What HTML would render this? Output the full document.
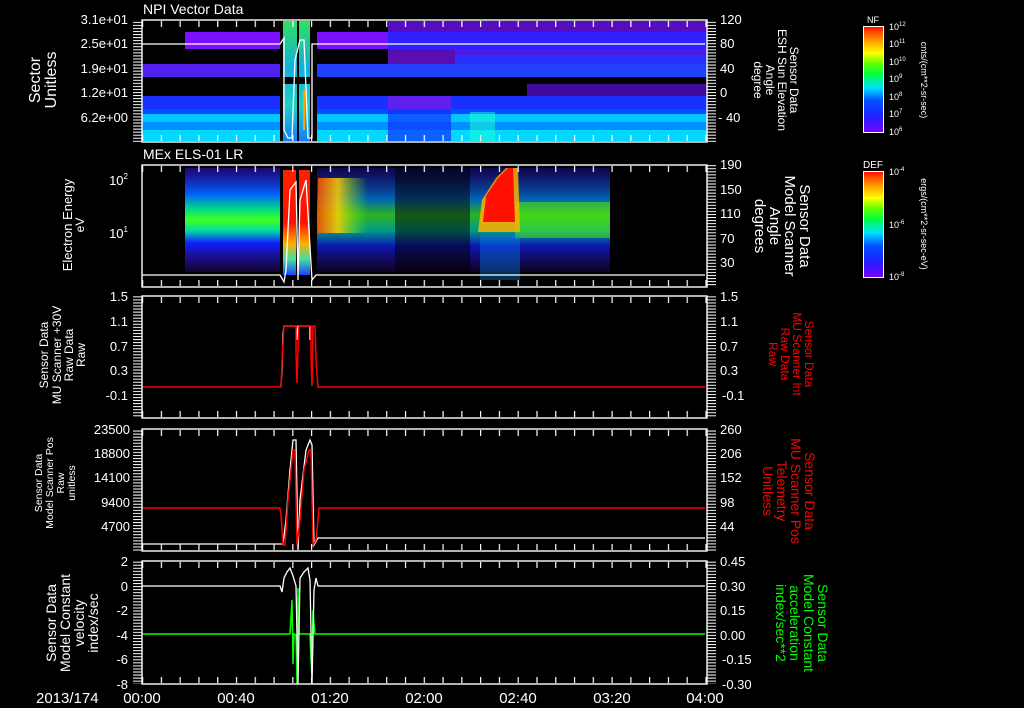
<!DOCTYPE html>
<html><head><meta charset="utf-8"><style>
html,body{margin:0;padding:0;background:#000;width:1024px;height:708px;overflow:hidden}
svg{display:block}
text{font-family:"Liberation Sans",sans-serif;fill:#fff}
</style></head><body>
<svg width="1024" height="708" viewBox="0 0 1024 708" xmlns="http://www.w3.org/2000/svg">
<defs>
<linearGradient id="rb" x1="0" y1="1" x2="0" y2="0">
<stop offset="0" stop-color="#7a00ff"/><stop offset="0.15" stop-color="#2020ff"/><stop offset="0.3" stop-color="#0050ff"/><stop offset="0.42" stop-color="#00e0ff"/><stop offset="0.55" stop-color="#00ff40"/><stop offset="0.65" stop-color="#60ff00"/><stop offset="0.75" stop-color="#ffff00"/><stop offset="0.88" stop-color="#ff9000"/><stop offset="1" stop-color="#ff1000"/>
</linearGradient>
<linearGradient id="ls" x1="0" y1="0" x2="0" y2="1">
<stop offset="0" stop-color="#3010e0" stop-opacity=".5"/><stop offset="0.25" stop-color="#0060ff"/><stop offset="0.4" stop-color="#00e080"/><stop offset="0.5" stop-color="#40ff20"/><stop offset="0.6" stop-color="#00e0a0"/><stop offset="0.72" stop-color="#1020ff"/><stop offset="1" stop-color="#4010c0" stop-opacity=".25"/>
</linearGradient>
<linearGradient id="rs" x1="0" y1="0" x2="0" y2="1">
<stop offset="0" stop-color="#3010e0" stop-opacity=".5"/><stop offset="0.3" stop-color="#0090ff"/><stop offset="0.45" stop-color="#40ff30"/><stop offset="0.6" stop-color="#00e0c0"/><stop offset="0.75" stop-color="#1020ff"/><stop offset="1" stop-color="#4010c0" stop-opacity=".25"/>
</linearGradient>
<linearGradient id="yb" x1="0" y1="0" x2="1" y2="0">
<stop offset="0" stop-color="#ff5000"/><stop offset="0.4" stop-color="#ffd000"/><stop offset="1" stop-color="#60ff00" stop-opacity="0"/>
</linearGradient>
<linearGradient id="red" x1="0" y1="0" x2="0" y2="1">
<stop offset="0" stop-color="#ff2000"/><stop offset="0.5" stop-color="#ff1000"/><stop offset="0.7" stop-color="#ffb000"/><stop offset="0.85" stop-color="#40e0a0"/><stop offset="1" stop-color="#2040ff"/>
</linearGradient>
<linearGradient id="strip" x1="0" y1="0" x2="0" y2="1">
<stop offset="0" stop-color="#30e060"/><stop offset="0.4" stop-color="#10b0e0"/><stop offset="0.7" stop-color="#20d0c0"/><stop offset="1" stop-color="#1080ff"/>
</linearGradient>
<pattern id="tx" x="142" y="0" width="18.78" height="10" patternUnits="userSpaceOnUse"><rect x="0" y="0" width="1.2" height="10" fill="#fff"/></pattern>
<pattern id="ty" x="0" y="0.5" width="10" height="3.05" patternUnits="userSpaceOnUse"><rect x="0" y="0" width="10" height="1" fill="#fff"/></pattern>
</defs>

<!-- Panel 1 spectrogram -->
<g>
<rect x="185" y="32" width="95" height="17" fill="#7a10ff"/>
<rect x="317" y="32" width="71" height="17" fill="#7a10ff"/>
<rect x="388" y="21" width="319" height="11" fill="#6a10f0" opacity=".8"/>
<rect x="388" y="32" width="319" height="17" fill="#3020ff"/>
<rect x="388" y="49" width="67" height="15" fill="#7010e0" opacity=".8"/>
<rect x="455" y="49" width="252" height="15" fill="#2830ff"/>
<rect x="455" y="49" width="252" height="6" fill="#6010e0" opacity=".7"/>
<rect x="142" y="64" width="138" height="13" fill="#5020f0"/>
<rect x="317" y="64" width="390" height="13" fill="#2040ff"/>
<rect x="527" y="84" width="180" height="12" fill="#6010e0" opacity=".7"/>
<rect x="142" y="96" width="138" height="13" fill="#1a30ff"/>
<rect x="317" y="96" width="390" height="13" fill="#1a30ff"/>
<rect x="388" y="96" width="63" height="13" fill="#6020f0"/>
<rect x="142" y="109" width="138" height="5" fill="#0050ff"/>
<rect x="317" y="109" width="390" height="5" fill="#0050ff"/>
<rect x="142" y="114" width="138" height="8" fill="#00c8ff"/>
<rect x="317" y="114" width="390" height="8" fill="#00c8ff"/>
<rect x="142" y="122" width="138" height="8" fill="#0090ff"/>
<rect x="317" y="122" width="390" height="8" fill="#0090ff"/>
<rect x="142" y="130" width="138" height="11" fill="#00d8ff"/>
<rect x="317" y="130" width="390" height="11" fill="#00d8ff"/>
<rect x="388" y="109" width="63" height="32" fill="#1030ff" opacity=".7"/>
<rect x="470" y="112" width="25" height="29" fill="#20ffd0" opacity=".5"/>
<rect x="283" y="21" width="14" height="120" fill="url(#strip)"/>
<rect x="299" y="21" width="11" height="120" fill="url(#strip)"/>
<rect x="283" y="77" width="14" height="7" fill="#000"/>
<rect x="299" y="77" width="11" height="7" fill="#000"/>
<rect x="303" y="90" width="2" height="40" fill="#ffa000"/>
</g>
<!-- Panel 2 spectrogram -->
<g>
<rect x="185" y="168" width="95" height="104" fill="url(#ls)"/>
<rect x="317" y="168" width="293" height="104" fill="url(#rs)" opacity=".7"/>
<rect x="318" y="178" width="50" height="55" fill="url(#yb)" opacity=".85"/>
<rect x="395" y="168" width="75" height="104" fill="#000" opacity=".5"/>
<rect x="515" y="202" width="95" height="36" fill="#60ff00" opacity=".45"/>
<polygon points="478,232 482,200 496,178 506,168 518,168 520,232" fill="#ffb000" opacity=".85"/>
<polygon points="483,222 486,196 498,178 508,168 513,168 515,222" fill="#ff1000"/>
<rect x="283" y="170" width="13" height="105" fill="url(#red)"/>
<rect x="299" y="170" width="11" height="105" fill="url(#red)"/>
<rect x="480" y="235" width="40" height="45" fill="#0090ff" opacity=".35"/>
</g>

<!-- white overlay lines panel1/2 -->
<g stroke="#fff" stroke-width="1.3" fill="none">
<polyline points="142,44 280,44 284,38 284,130 288,138 292,138 295,60 300,40 304,40 308,138 312,138 312,44 316,44 705,44"/>
<polyline points="142,275 280,275 284,282 286,270 290,190 296,182 298,280 300,200 306,180 312,280 316,275 705,275"/>
</g>

<!-- Panel 3 -->
<polyline fill="none" stroke="#fff" stroke-width="1.3" points="281,386 282,370 283,334 284,326 296,326 297,340 298,326 308,326 310,326 310,340"/>
<polyline fill="none" stroke="#f00" stroke-width="1.5" points="142,387 281,387 282,362 284,326 296,326 296,352 297,383 298,350 299,326 311,326 311,354 312,386 313,326 315,326 316,360 318,387 705,387"/>
<!-- Panel 4 -->
<polyline fill="none" stroke="#fff" stroke-width="1.3" points="142,544 283,544 286,520 290,470 293,440 296,440 298,550 300,500 306,450 310,440 312,445 314,545 318,538 705,538"/>
<polyline fill="none" stroke="#f00" stroke-width="1.5" points="142,508 280,508 281,515 283,545 285,545 288,500 293,450 295,450 297,545 300,520 304,470 309,450 311,450 313,545 316,540 318,520 319,508 705,508"/>
<!-- Panel 5 -->
<polyline fill="none" stroke="#0f0" stroke-width="1.5" points="142,634 290,634 292,600 293,664 294,634 296,635 297,684 298,588 299,634 310,634 311,660 312,675 313,610 314,624 315,634 705,634"/>
<polyline fill="none" stroke="#fff" stroke-width="1.3" points="142,586 280,586 282,592 284,578 287,572 290,568 293,576 296,586 298,684 300,578 304,572 308,568 310,580 312,684 314,590 316,578 318,586 705,586"/>

<!-- frames -->
<g stroke="#fff" stroke-width="1.4" fill="none">
<rect x="142" y="20" width="565" height="122"/>
<rect x="142" y="165" width="565" height="122"/>
<rect x="142" y="296" width="565" height="122"/>
<rect x="142" y="429" width="565" height="122"/>
<rect x="142" y="561" width="565" height="123"/>
</g>
<!-- x ticks -->
<g>
<rect x="142" y="21" width="565" height="6" fill="url(#tx)"/><rect x="142" y="135" width="565" height="6" fill="url(#tx)"/>
<rect x="142" y="166" width="565" height="6" fill="url(#tx)"/><rect x="142" y="280" width="565" height="6" fill="url(#tx)"/>
<rect x="142" y="297" width="565" height="6" fill="url(#tx)"/><rect x="142" y="411" width="565" height="6" fill="url(#tx)"/>
<rect x="142" y="430" width="565" height="6" fill="url(#tx)"/><rect x="142" y="544" width="565" height="6" fill="url(#tx)"/>
<rect x="142" y="562" width="565" height="6" fill="url(#tx)"/><rect x="142" y="677" width="565" height="6" fill="url(#tx)"/>
</g>
<!-- y minor ticks -->
<g fill="url(#ty)">
<rect x="133" y="20" width="9" height="122"/><rect x="707" y="20" width="9" height="122"/>
<rect x="707" y="165" width="9" height="122"/>
<rect x="133" y="296" width="9" height="122"/><rect x="707" y="296" width="9" height="122"/>
<rect x="133" y="429" width="9" height="122"/><rect x="707" y="429" width="9" height="122"/>
<rect x="133" y="561" width="9" height="123"/><rect x="707" y="561" width="9" height="123"/>
</g>

<!-- tick labels -->
<g font-size="13" text-anchor="end">
<text x="128" y="24">3.1e+01</text><text x="128" y="48">2.5e+01</text><text x="128" y="73">1.9e+01</text><text x="128" y="97">1.2e+01</text><text x="128" y="122">6.2e+00</text>
<text x="128" y="185">10<tspan font-size="8" dy="-6">2</tspan></text><text x="128" y="238">10<tspan font-size="8" dy="-6">1</tspan></text>
<text x="128" y="301">1.5</text><text x="128" y="326">1.1</text><text x="128" y="351">0.7</text><text x="128" y="375">0.3</text><text x="128" y="400">-0.1</text>
<text x="130" y="434">23500</text><text x="130" y="458">18800</text><text x="130" y="482">14100</text><text x="130" y="507">9400</text><text x="130" y="531">4700</text>
<text x="128" y="566">2</text><text x="128" y="591">0</text><text x="128" y="615">-2</text><text x="128" y="640">-4</text><text x="128" y="664">-6</text><text x="128" y="689">-8</text>
</g>
<g font-size="13">
<text x="720" y="24">120</text><text x="720" y="48">80</text><text x="720" y="73">40</text><text x="720" y="97">0</text><text x="718" y="122">- 40</text>
<text x="720" y="169">190</text><text x="720" y="194">150</text><text x="720" y="218">110</text><text x="720" y="243">70</text><text x="720" y="267">30</text>
<text x="720" y="301">1.5</text><text x="720" y="326">1.1</text><text x="720" y="351">0.7</text><text x="720" y="375">0.3</text><text x="722" y="400">-0.1</text>
<text x="720" y="434">260</text><text x="720" y="458">206</text><text x="720" y="482">152</text><text x="720" y="507">98</text><text x="720" y="531">44</text>
<text x="720" y="566">0.45</text><text x="720" y="591">0.30</text><text x="720" y="615">0.15</text><text x="720" y="640">0.00</text><text x="722" y="664">-0.15</text><text x="722" y="689">-0.30</text>
</g>
<g font-size="15" text-anchor="middle">
<text x="142" y="703">00:00</text><text x="236" y="703">00:40</text><text x="330" y="703">01:20</text><text x="424" y="703">02:00</text><text x="518" y="703">02:40</text><text x="612" y="703">03:20</text><text x="705" y="703">04:00</text>
</g>
<text x="36" y="703" font-size="15">2013/174</text>
<text x="143" y="14" font-size="14">NPI Vector Data</text>
<text x="143" y="159" font-size="14">MEx ELS-01 LR</text>

<!-- left titles -->
<g text-anchor="middle">
<text transform="translate(40,80) rotate(-90)" font-size="16">Sector</text>
<text transform="translate(56,80) rotate(-90)" font-size="16">Unitless</text>
<text transform="translate(72,225) rotate(-90)" font-size="13">Electron Energy</text>
<text transform="translate(84,225) rotate(-90)" font-size="12">eV</text>
<text transform="translate(48,355) rotate(-90)" font-size="12">Sensor Data</text>
<text transform="translate(61,355) rotate(-90)" font-size="12">MU Scanner +30V</text>
<text transform="translate(73,355) rotate(-90)" font-size="12">Raw Data</text>
<text transform="translate(85,355) rotate(-90)" font-size="12">Raw</text>
<text transform="translate(42,483) rotate(-90)" font-size="10.5">Sensor Data</text>
<text transform="translate(53,483) rotate(-90)" font-size="10.5">Model Scanner Pos</text>
<text transform="translate(64,483) rotate(-90)" font-size="10.5">Raw</text>
<text transform="translate(75,483) rotate(-90)" font-size="10.5">unitless</text>
<text transform="translate(56,623) rotate(-90)" font-size="14">Sensor Data</text>
<text transform="translate(70,623) rotate(-90)" font-size="14">Model Constant</text>
<text transform="translate(84,623) rotate(-90)" font-size="14">velocity</text>
<text transform="translate(98,623) rotate(-90)" font-size="14">index/sec</text>
</g>
<!-- right titles -->
<g text-anchor="middle">
<text transform="translate(790,80) rotate(90)" font-size="12">Sensor Data</text>
<text transform="translate(778,80) rotate(90)" font-size="12">ESH Sun Elevation</text>
<text transform="translate(766,80) rotate(90)" font-size="12">Angle</text>
<text transform="translate(754,80) rotate(90)" font-size="12">degree</text>
<text transform="translate(800,226) rotate(90)" font-size="15">Sensor Data</text>
<text transform="translate(785,226) rotate(90)" font-size="15">Model Scanner</text>
<text transform="translate(770,226) rotate(90)" font-size="15">Angle</text>
<text transform="translate(755,226) rotate(90)" font-size="15">degrees</text>
</g>
<g text-anchor="middle">
<text transform="translate(805,354) rotate(90)" font-size="12" style="fill:#f00">Sensor Data</text>
<text transform="translate(793,354) rotate(90)" font-size="12" style="fill:#f00">MU Scanner Int</text>
<text transform="translate(781,354) rotate(90)" font-size="12" style="fill:#f00">Raw Data</text>
<text transform="translate(769,354) rotate(90)" font-size="12" style="fill:#f00">Raw</text>
<text transform="translate(805,491) rotate(90)" font-size="14" style="fill:#f00">Sensor Data</text>
<text transform="translate(791,491) rotate(90)" font-size="14" style="fill:#f00">MU Scanner Pos</text>
<text transform="translate(777,491) rotate(90)" font-size="14" style="fill:#f00">Telemetry</text>
<text transform="translate(763,491) rotate(90)" font-size="14" style="fill:#f00">Unitless</text>
<text transform="translate(818,623) rotate(90)" font-size="14" style="fill:#0f0">Sensor Data</text>
<text transform="translate(804,623) rotate(90)" font-size="14" style="fill:#0f0">Model Constant</text>
<text transform="translate(790,623) rotate(90)" font-size="14" style="fill:#0f0">acceleration</text>
<text transform="translate(776,623) rotate(90)" font-size="14" style="fill:#0f0">index/sec**2</text>
</g>

<!-- colorbars -->
<rect x="863.5" y="26.5" width="20" height="106" fill="url(#rb)" stroke="#fff"/>
<rect x="863.5" y="171.5" width="20" height="106" fill="url(#rb)" stroke="#fff"/>
<text x="873" y="23" font-size="9" text-anchor="middle">NF</text>
<text x="873" y="168" font-size="10" text-anchor="middle">DEF</text>
<g font-size="9">
<text x="889" y="30">10<tspan font-size="6" dy="-4">12</tspan></text>
<text x="889" y="47">10<tspan font-size="6" dy="-4">11</tspan></text>
<text x="889" y="65">10<tspan font-size="6" dy="-4">10</tspan></text>
<text x="889" y="82">10<tspan font-size="6" dy="-4">9</tspan></text>
<text x="889" y="100">10<tspan font-size="6" dy="-4">8</tspan></text>
<text x="889" y="117">10<tspan font-size="6" dy="-4">7</tspan></text>
<text x="889" y="135">10<tspan font-size="6" dy="-4">6</tspan></text>
<text x="889" y="175">10<tspan font-size="6" dy="-4">-4</tspan></text>
<text x="889" y="228">10<tspan font-size="6" dy="-4">-6</tspan></text>
<text x="889" y="280">10<tspan font-size="6" dy="-4">-8</tspan></text>
</g>
<text transform="translate(921,80) rotate(90)" font-size="9" text-anchor="middle">cnts/(cm**2-sr-sec)</text>
<text transform="translate(921,224) rotate(90)" font-size="9" text-anchor="middle">ergs/(cm**2-sr-sec-eV)</text>
</svg>
</body></html>
